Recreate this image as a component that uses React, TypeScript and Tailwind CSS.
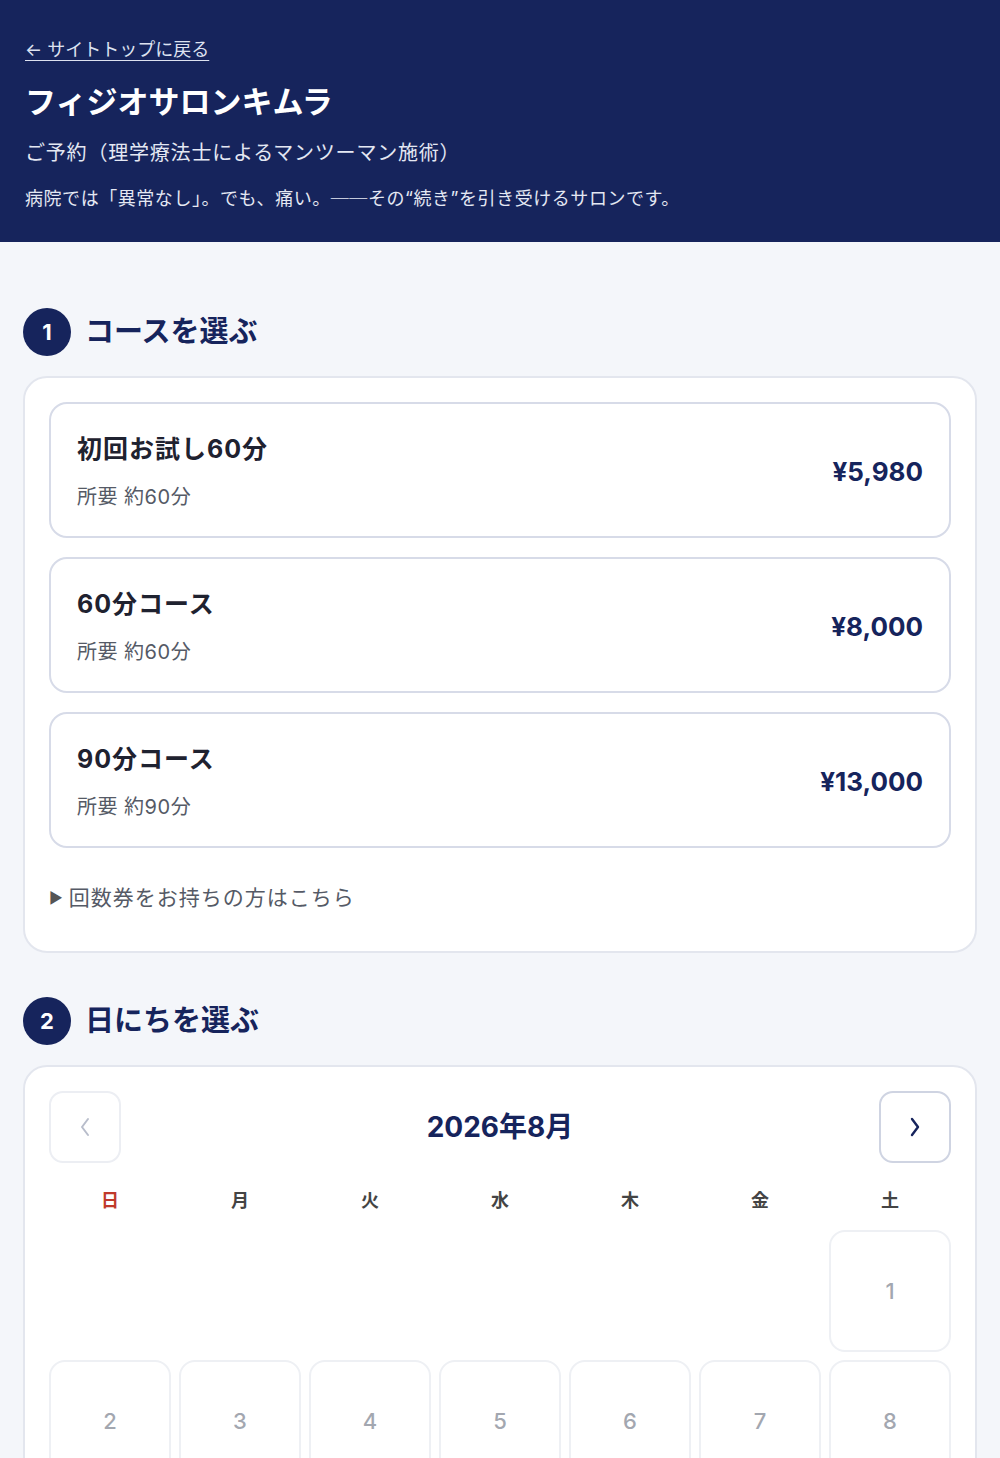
import { useState } from 'react'

const COURSES = [
  { name: '初回お試し60分', time: '所要 約60分', price: '¥5,980' },
  { name: '60分コース', time: '所要 約60分', price: '¥8,000' },
  { name: '90分コース', time: '所要 約90分', price: '¥13,000' },
]

const WEEK = ['日', '月', '火', '水', '木', '金', '土']

// 2026年8月は土曜始まり
const FIRST_DAY = 6
const DAYS = 31

function StepTitle({ n, label }: { n: number; label: string }) {
  return (
    <div className="flex items-center gap-[14px]">
      <div className="w-[48px] h-[48px] rounded-full bg-[#16245c] text-white flex items-center justify-center text-[22px] font-bold">
        {n}
      </div>
      <h2 className="text-[29px] font-bold text-[#16245c] leading-[40px]">{label}</h2>
    </div>
  )
}

export default function App() {
  const [selected, setSelected] = useState<number | null>(null)
  const cells: (number | null)[] = [
    ...Array.from({ length: FIRST_DAY }, () => null),
    ...Array.from({ length: DAYS }, (_, i) => i + 1),
  ]

  return (
    <div
      className="min-h-screen bg-[#f4f6fa] text-[#222]"
      style={{ fontFamily: 'Inter, "Noto Sans CJK JP", sans-serif' }}
    >
      {/* Header */}
      <header className="bg-[#16245c] text-white px-[25px] pt-[36px] pb-[30px]">
        <a href="#" className="text-[18px] leading-[27px] text-[#dde2f0] underline underline-offset-[4px]">
          ← サイトトップに戻る
        </a>
        <h1 className="mt-[16px] text-[31px] font-bold leading-[45px]">フィジオサロンキムラ</h1>
        <p className="mt-[14px] text-[20px] leading-[30px] text-[#e4e8f3] tracking-[0.8px]">ご予約（理学療法士によるマンツーマン施術）</p>
        <p className="mt-[17px] text-[18px] leading-[27px] text-[#e4e8f3] tracking-[0.55px]">
          病院では「異常なし」。でも、痛い。──その“続き”を引き受けるサロンです。
        </p>
      </header>

      <main className="px-[23px] pt-[66px] pb-[40px]">
        {/* Step 1 */}
        <StepTitle n={1} label="コースを選ぶ" />
        <section className="mt-[20px] bg-white border-2 border-[#e3e6ee] rounded-[24px] px-[24px] pt-[24px] pb-[38px]">
          <div className="flex flex-col gap-[19px]">
            {COURSES.map((c) => (
              <button
                key={c.name}
                className="w-full flex items-center justify-between border-2 border-[#d7dbe8] rounded-[18px] px-[26px] pt-[27px] pb-[24px] text-left bg-white"
              >
                <div>
                  <div className="text-[25px] font-bold leading-[36px] text-[#1f2230] tracking-[1px]">{c.name}</div>
                  <div className="mt-[15px] text-[20px] leading-[30px] text-[#555a66] tracking-[0.5px]">{c.time}</div>
                </div>
                <div className="text-[26px] font-bold text-[#16245c]">{c.price}</div>
              </button>
            ))}
          </div>
          <div className="mt-[35px] text-[21px] leading-[30px] text-[#555a66] flex items-center gap-[6px]">
            <span className="text-[15px] text-[#555]">▶</span>
            <span className="tracking-[1px]">回数券をお持ちの方はこちら</span>
          </div>
        </section>

        {/* Step 2 */}
        <div className="mt-[44px]">
          <StepTitle n={2} label="日にちを選ぶ" />
        </div>
        <section className="mt-[20px] bg-white border-2 border-[#e3e6ee] rounded-[24px] px-[24px] pt-[24px] pb-[26px]">
          <div className="flex items-center justify-between">
            <button className="w-[72px] h-[72px] rounded-[14px] border-2 border-[#eceef3] flex items-center justify-center">
              <svg width="10" height="22" viewBox="0 0 10 22" fill="none">
                <polyline points="8,3 2,11 8,19" stroke="#b8bdcb" strokeWidth="2" strokeLinecap="round" strokeLinejoin="round" />
              </svg>
            </button>
            <div className="text-[28px] font-bold text-[#16245c]">2026年8月</div>
            <button className="w-[72px] h-[72px] rounded-[14px] border-2 border-[#cfd4e2] flex items-center justify-center">
              <svg width="10" height="22" viewBox="0 0 10 22" fill="none">
                <polyline points="2,3 8,11 2,19" stroke="#16245c" strokeWidth="2.4" strokeLinecap="round" strokeLinejoin="round" />
              </svg>
            </button>
          </div>

          <div className="mt-[24px] grid grid-cols-7 gap-[8px]">
            {WEEK.map((w, i) => (
              <div
                key={w}
                className={`text-center text-[18px] font-bold leading-[27px] ${i === 0 ? 'text-[#c0392b]' : 'text-[#444]'}`}
              >
                {w}
              </div>
            ))}
          </div>

          <div className="mt-[16px] grid grid-cols-7 gap-[8px]">
            {cells.map((d, i) =>
              d === null ? (
                <div key={`e${i}`} />
              ) : (
                <button
                  key={d}
                  onClick={() => setSelected(d)}
                  className={`aspect-square rounded-[16px] border-2 flex items-center justify-center text-[22px] font-medium ${
                    selected === d ? 'border-[#16245c] text-[#16245c]' : 'border-[#eef0f4] text-[#a3a7b0]'
                  }`}
                >
                  {d}
                </button>
              ),
            )}
          </div>
        </section>
      </main>
    </div>
  )
}
